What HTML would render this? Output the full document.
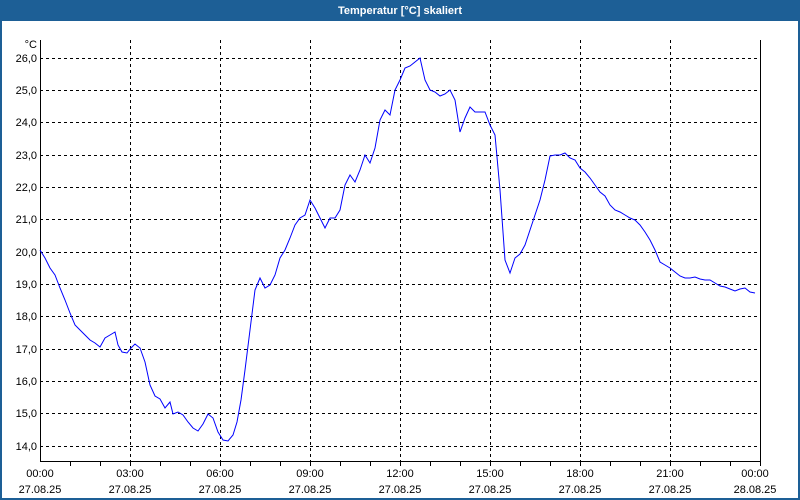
<!DOCTYPE html>
<html><head><meta charset="utf-8"><style>
html,body{margin:0;padding:0;background:#fff}
body{width:800px;height:500px;overflow:hidden;position:relative;font-family:"Liberation Sans","DejaVu Sans",sans-serif}
</style></head><body>
<svg width="800" height="500" xmlns="http://www.w3.org/2000/svg" style="position:absolute;left:0;top:0">
<rect x="0" y="0" width="800" height="500" fill="#1d5f96"/>
<rect x="2" y="21" width="796" height="477" fill="#fff"/>
<text x="400" y="14" fill="#fff" font-size="11" font-weight="bold" text-anchor="middle">Temperatur [°C] skaliert</text>
<g stroke="#000" stroke-width="1" stroke-dasharray="3,3" fill="none">
<path d="M40 58.5H760M40 90.5H760M40 122.5H760M40 155.5H760M40 187.5H760M40 219.5H760M40 252.5H760M40 284.5H760M40 316.5H760M40 349.5H760M40 381.5H760M40 413.5H760M40 446.5H760"/>
<path d="M130.5 40V461M220.5 40V461M310.5 40V461M400.5 40V461M490.5 40V461M580.5 40V461M670.5 40V461"/>
</g>
<path d="M40.5 40V461.5H760.5V40" stroke="#000" fill="none"/>
<g stroke="#000"><path d="M70.5 461V466M100.5 461V466M130.5 461V466M160.5 461V466M190.5 461V466M220.5 461V466M250.5 461V466M280.5 461V466M310.5 461V466M340.5 461V466M370.5 461V466M400.5 461V466M430.5 461V466M460.5 461V466M490.5 461V466M520.5 461V466M550.5 461V466M580.5 461V466M610.5 461V466M640.5 461V466M670.5 461V466M700.5 461V466M730.5 461V466M760.5 461V466"/></g>
<g font-size="11" fill="#000" text-anchor="end">
<text x="37" y="48">°C</text>
<text x="37" y="62">26,0</text><text x="37" y="94">25,0</text><text x="37" y="126">24,0</text><text x="37" y="159">23,0</text><text x="37" y="191">22,0</text><text x="37" y="223">21,0</text><text x="37" y="256">20,0</text><text x="37" y="288">19,0</text><text x="37" y="320">18,0</text><text x="37" y="353">17,0</text><text x="37" y="385">16,0</text><text x="37" y="417">15,0</text><text x="37" y="450">14,0</text>
</g>
<g font-size="11" fill="#000" text-anchor="middle">
<text x="40" y="477">00:00</text><text x="40" y="493">27.08.25</text>
<text x="130" y="477">03:00</text><text x="130" y="493">27.08.25</text>
<text x="220" y="477">06:00</text><text x="220" y="493">27.08.25</text>
<text x="310" y="477">09:00</text><text x="310" y="493">27.08.25</text>
<text x="400" y="477">12:00</text><text x="400" y="493">27.08.25</text>
<text x="490" y="477">15:00</text><text x="490" y="493">27.08.25</text>
<text x="580" y="477">18:00</text><text x="580" y="493">27.08.25</text>
<text x="670" y="477">21:00</text><text x="670" y="493">27.08.25</text>
<text x="755" y="477">00:00</text><text x="755" y="493">28.08.25</text>
</g>
<polyline fill="none" stroke="#0000ff" stroke-width="1" points="40,250 45,258 50,268 55,275 60,288 65,300 70,313 75,325 80,330 85,335 90,340 95,343 100,347 105,338 110,335 115,332 118,345 122,352 127,353 131,348 135,344 140,348 145,362 150,385 155,396 160,399 165,408 170,402 173,414 178,412 183,415 188,422 193,428 198,431 203,424 208,414 213,418 218,432 223,440 228,441 233,435 237,422 241,400 245,370 250,330 255,290 260,278 265,288 270,285 275,275 280,258 285,250 290,238 295,225 300,218 305,215 310,200 315,208 320,218 325,228 330,218 335,218 340,210 345,185 350,175 355,182 360,170 365,155 370,163 375,148 380,120 385,110 390,115 395,90 400,80 405,68 410,66 415,62 420,58 425,80 430,90 435,92 440,96 445,94 450,90 455,100 460,132 465,118 470,107 475,112 480,112 485,112 490,125 495,135 500,190 505,260 510,273 515,258 520,254 525,245 530,230 535,215 540,200 545,180 550,156 555,155 560,155 565,153 570,158 575,160 580,168 585,172 590,178 595,185 600,192 605,196 610,205 615,210 620,212 625,215 630,218 635,220 640,225 645,232 650,240 655,250 660,262 665,265 670,268 675,272 680,276 685,278 690,278 695,277 700,279 705,280 710,280 715,283 720,286 725,287 730,289 735,291 740,289 745,288 750,292 755,293"/>
</svg>
</body></html>
